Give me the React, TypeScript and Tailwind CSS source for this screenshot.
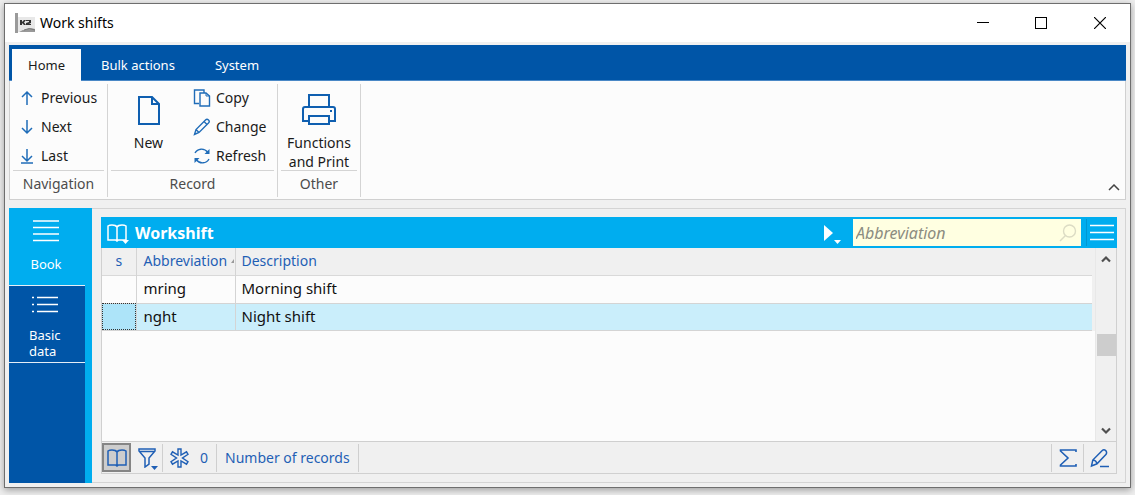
import React, { useState } from 'react';

const rows = [
  { id: 1, abbreviation: 'mring', description: 'Morning shift' },
  { id: 2, abbreviation: 'nght', description: 'Night shift' },
];

function BookIcon() {
  return (
    <svg width="20" height="18" viewBox="0 0 20 18" fill="none" stroke="currentColor" strokeWidth="1.5">
      <path d="M10 3v13M10 3C9 1.300 7 1 5 1S2 1.300 1 2v14h7.500L10 17l1.500-1H19V2c-1-.7-2-1-4-1s-4 .3-5 2" />
    </svg>
  );
}

function Caret({ className }: { className: string }) {
  return (
    <svg className={className} width="7" height="4" viewBox="0 0 7 4" fill="currentColor">
      <path d="M0 0h7L3.500 4Z" />
    </svg>
  );
}

function ArrowIcon({ kind }: { kind: 'up' | 'down' | 'last' }) {
  return (
    <svg width="14" height="16" viewBox="0 0 14 16" fill="none" stroke="currentColor" strokeWidth="1.5">
      {kind === 'up' && <path d="M7 15V2M2 7l5-5 5 5" />}
      {kind === 'down' && <path d="M7 1v13M2 9l5 5 5-5" />}
      {kind === 'last' && <path d="M7 1v12M2 8l5 5 5-5M1 15h12" />}
    </svg>
  );
}

function CopyIcon() {
  return (
    <svg width="18" height="18" viewBox="0 0 18 18" fill="none" stroke="currentColor" strokeWidth="1.400">
      <path d="M6 14.500H1.500V1H11v3" />
      <path d="M7 4h6l3.500 3v10H7Z" />
      <path d="M13 4v3h3.500" strokeWidth="1" />
    </svg>
  );
}

function PencilIcon() {
  return (
    <svg width="18" height="18" viewBox="0 0 18 18" fill="none" stroke="currentColor" strokeWidth="1.400">
      <path d="M1.500 16.500 3 11.500 12.500 2c1-1 2.200-.8 3 0s1 2 0 3L6 14.500ZM3 11.500l3 3M11 3.500l3 3" />
    </svg>
  );
}

function RefreshIcon() {
  return (
    <svg width="18" height="18" viewBox="0 0 18 18" fill="none" stroke="currentColor" strokeWidth="1.400">
      <path d="M2 6C4.500 1.500 11 .5 15 5.500" />
      <path d="M16.500 2v5h-5Z" fill="currentColor" stroke="none" />
      <path d="M16 12c-2.500 4.500-9 5.500-13 .5" />
      <path d="M1.500 16v-5h5Z" fill="currentColor" stroke="none" />
    </svg>
  );
}

function NewIcon() {
  return (
    <svg width="22" height="29" viewBox="0 0 22 29" fill="none" stroke="currentColor" strokeWidth="2">
      <path d="M1 1h13l7 7v20H1ZM14 1v7h7" />
    </svg>
  );
}

function PrintIcon() {
  return (
    <svg width="34" height="31" viewBox="0 0 34 31" fill="none" stroke="currentColor" strokeWidth="2">
      <path d="M7 13V1h20v12M7 27H1V15q0-2 2-2h28q2 0 2 2v12h-6" />
      <path d="M7 22h20v8H7Z" />
      <path d="M28 17h2" />
    </svg>
  );
}

function RibbonButton({ icon, label }: { icon: React.ReactNode; label: string }) {
  return (
    <button className="flex flex-1 items-center gap-1 leading-5">
      <span className="flex w-5 justify-center text-[#1f6cb8]">{icon}</span>
      {label}
    </button>
  );
}

function RibbonGroup({ title, className, children }: { title: string; className: string; children: React.ReactNode }) {
  return (
    <section className={`flex flex-col border-r border-[#d4d4d4] px-[3px] ${className}`}>
      <div className="flex h-[87px] border-b border-[#d4d4d4]">{children}</div>
      <h2 className="flex flex-1 items-center justify-center text-[#4c4c4c]">{title}</h2>
    </section>
  );
}

function TitleBar() {
  return (
    <header className="flex h-[38px] items-center bg-white pl-[10px] text-black">
      <svg width="20" height="20" viewBox="0 0 20 20" aria-hidden="true">
        <path d="M0 0h3v20H0Z" fill="#9a9a9a" />
        <path d="M3 4h17v15H3Z" fill="#e8e8e8" />
        <path d="M5 7h2v2l2-2h2L9 9.500 11 12H9L7 10v2H5ZM11 7h5v3l-2 1h2v1h-5v-2l3-1V8h-3Z" fill="#333" />
        <path d="M3 19c3 0 3-2 6-2s5-3 11-1v3Z" fill="#999" />
        <path d="M9 17q5-3 11 0" fill="none" stroke="#777" />
      </svg>
      <h1 className="flex-1 pl-[5px] text-sm">Work shifts</h1>
      <button aria-label="Minimize" className="flex w-[58px] justify-center">
        <svg width="12" height="12" stroke="currentColor" shapeRendering="crispEdges"><path d="M0 5.500h12" /></svg>
      </button>
      <button aria-label="Maximize" className="flex w-[58px] justify-center">
        <svg width="12" height="12" fill="none" stroke="currentColor" shapeRendering="crispEdges"><path d="M.5.5h11v11H.5Z" /></svg>
      </button>
      <button aria-label="Close" className="flex w-[60px] justify-center">
        <svg width="12" height="12" stroke="currentColor" strokeWidth="1.200"><path d="M0 0l12 12M12 0 0 12" /></svg>
      </button>
    </header>
  );
}

function Ribbon() {
  const [tab, setTab] = useState('Home');

  return (
    <div className="border-x border-b border-[#d0d0d0] bg-[#fcfcfc]">
      <nav className="-mx-px flex h-9 items-end border-b border-[#4a88c6] bg-[#0055a7] pl-[3px] text-[13px]">
        {['Home', 'Bulk actions', 'System'].map((name) => (
          <button
            key={name}
            onClick={() => setTab(name)}
            className={
              tab === name
                ? '-mb-px h-8 bg-[#fcfcfc] px-4 text-[#1a1a1a]'
                : '-mb-px h-8 px-5 text-white'
            }
          >
            {name}
          </button>
        ))}
      </nav>
      <div className="flex h-[118px] items-end">
        <div className="flex h-[115px] flex-1 pb-[2px]">
          <RibbonGroup title="Navigation" className="w-[98px]">
            <div className="flex flex-col pl-[4px]">
              <RibbonButton icon={<ArrowIcon kind="up" />} label="Previous" />
              <RibbonButton icon={<ArrowIcon kind="down" />} label="Next" />
              <RibbonButton icon={<ArrowIcon kind="last" />} label="Last" />
            </div>
          </RibbonGroup>
          <RibbonGroup title="Record" className="w-[170px]">
            <button className="flex w-[75px] flex-col items-center justify-start gap-2 pt-3 leading-5">
              <span className="text-[#0f5fb0]"><NewIcon /></span>
              New
            </button>
            <div className="flex flex-col pl-[6px]">
              <RibbonButton icon={<CopyIcon />} label="Copy" />
              <RibbonButton icon={<PencilIcon />} label="Change" />
              <RibbonButton icon={<RefreshIcon />} label="Refresh" />
            </div>
          </RibbonGroup>
          <RibbonGroup title="Other" className="w-[83px]">
            <button className="flex flex-1 flex-col items-center justify-start gap-2 pt-[10px] leading-[19px] whitespace-nowrap">
              <span className="text-[#0f5fb0]"><PrintIcon /></span>
              <span>Functions<br />and Print</span>
            </button>
          </RibbonGroup>
        </div>
        <button aria-label="Collapse ribbon" className="mr-[5px] mb-2 text-[#444]">
          <svg width="12" height="7" viewBox="0 0 12 7" fill="none" stroke="currentColor" strokeWidth="1.500"><path d="M1 6l5-5 5 5" /></svg>
        </button>
      </div>
    </div>
  );
}

function Sidebar() {
  return (
    <nav className="flex w-[83px] shrink-0 flex-col border-r-[7px] border-[#00adef] bg-[#0055a7] text-[13px] leading-4 text-white">
      <button className="-mr-[7px] flex h-[77px] flex-col items-center bg-[#00adef] pt-3 pr-[9px]">
        <svg className="mb-[14px]" width="26" height="22" stroke="currentColor" strokeWidth="1.500">
          <path d="M0 1h26M0 7.500h26M0 14h26M0 20.500h26" />
        </svg>
        Book
      </button>
      <button className="flex h-[78px] flex-col items-center border-y border-white/90 pt-[10px] pr-1">
        <svg className="mb-[13px]" width="26" height="18" stroke="currentColor" strokeWidth="1.500">
          <path d="M5 1.500h21M5 8.500h21M5 15.500h21M0 1.500h2M0 8.500h2M0 15.500h2" />
        </svg>
        <span className="w-8 text-left">Basic data</span>
      </button>
    </nav>
  );
}

function ShiftTable() {
  const [selected, setSelected] = useState(2);

  return (
    <div className="flex-1 bg-[#fcfcfc]">
      <div className="bg-[#f0f0f0] pr-[3px]">
        <table className="w-full table-fixed border-collapse text-left text-[15px] text-[#111]">
          <colgroup>
            <col className="w-[34px]" />
            <col className="w-[99px]" />
            <col />
          </colgroup>
          <thead>
            <tr className="h-[27px] border-b border-[#d9d9d9] bg-[#f0f0f0] text-sm text-[#1f5fb5]">
              <th className="border-r border-[#d4d4d4] text-center font-normal">s</th>
              <th className="border-r border-[#d4d4d4] pl-[7px] font-normal whitespace-nowrap">
                <span className="flex items-center justify-between">
                  Abbreviation
                  <svg width="4" height="4" fill="#999"><path d="M0 4 3 0v4Z" /></svg>
                </span>
              </th>
              <th className="pl-[6px] font-normal">Description</th>
            </tr>
          </thead>
          <tbody>
            {rows.map((row) => (
              <tr
                key={row.id}
                onClick={() => setSelected(row.id)}
                className={
                  selected === row.id
                    ? 'h-[27px] border-b border-[#d4d4d4] bg-[#caeefb]'
                    : 'h-7 border-b border-[#d4d4d4] bg-[#fcfcfc]'
                }
              >
                <td
                  className={
                    selected === row.id
                      ? 'border-r border-[#d4d4d4] bg-[#ade4f9] outline-1 -outline-offset-1 outline-dotted outline-[#333]'
                      : 'border-r border-[#d4d4d4]'
                  }
                />
                <td className="border-r border-[#d4d4d4] pl-[7px]">{row.abbreviation}</td>
                <td className="pl-[6px]">{row.description}</td>
              </tr>
            ))}
          </tbody>
        </table>
      </div>
    </div>
  );
}

function ScrollBar() {
  return (
    <div className="flex w-[21px] flex-col items-center border-l border-[#e8e8e8] bg-[#f0f0f0] text-[#505050]">
      <button aria-label="Scroll up" className="flex h-[21px] w-full items-center justify-center">
        <svg width="10" height="8" viewBox="0 0 10 8" fill="none" stroke="currentColor" strokeWidth="2.200"><path d="M1 6.500l4-4 4 4" /></svg>
      </button>
      <div className="mt-[65px] h-[22px] w-[19px] bg-[#cdcdcd]" />
      <button aria-label="Scroll down" className="mt-auto flex h-[21px] w-full items-center justify-center">
        <svg width="10" height="8" viewBox="0 0 10 8" fill="none" stroke="currentColor" strokeWidth="2.200"><path d="M1 1.500l4 4 4-4" /></svg>
      </button>
    </div>
  );
}

function StatusBar() {
  return (
    <footer className="flex h-8 items-center border-t border-[#cfcfcf] text-[#1f5fb5]">
      <button aria-label="Book view" className="flex h-[29px] w-[29px] items-center justify-center border-2 border-[#858585] bg-[#cdcdcd]">
        <BookIcon />
      </button>
      <button aria-label="Filter" className="relative flex h-7 w-8 items-center justify-center border-r border-[#cfcfcf]">
        <svg width="18" height="20" viewBox="0 0 18 20" fill="none" stroke="currentColor" strokeWidth="1.500">
          <path d="M1 1h16v2l-6 7v6l-4 3v-9L1 3ZM2 3.500h14" />
        </svg>
        <Caret className="absolute right-1 bottom-[2px]" />
      </button>
      <div className="flex h-7 w-[54px] items-center justify-between border-r border-[#cfcfcf] pr-2 pl-[7px]">
        <svg width="19" height="20" viewBox="0 0 19 20" fill="none" stroke="currentColor" strokeWidth="1.400">
          <path d="M8 1h3v6l5.500-3.200 1.500 2.600L12.500 10l5.500 3.600-1.500 2.600L11 13v6H8v-6l-5.500 3.200L1 13.600 6.500 10 1 6.400l1.500-2.600L8 7Z" />
        </svg>
        <span>0</span>
      </div>
      <span className="flex h-7 items-center border-r border-[#cfcfcf] px-2">Number of records</span>
      <button aria-label="Sum" className="ml-auto flex h-7 w-[33px] items-center justify-center border-x border-[#cfcfcf]">
        <svg width="18" height="18" viewBox="0 0 18 18" fill="none" stroke="currentColor" strokeWidth="1.600">
          <path d="M17 3V1H1.500v1L9 9l-7.500 7v1H17v-2" />
        </svg>
      </button>
      <button aria-label="Edit" className="flex h-7 w-8 items-center justify-center">
        <svg width="20" height="20" viewBox="0 0 20 20" fill="none" stroke="currentColor" strokeWidth="1.500">
          <path d="M1.500 18l1.300-6L12 2.800c1-1 2.600-1.200 3.700-.2s1.200 2.700.2 3.800L7 15.800ZM2.800 12c2 .2 3.800 1.800 4.200 3.800M10 18.500h9" />
        </svg>
      </button>
    </footer>
  );
}

function WorkshiftPanel() {
  return (
    <main className="flex flex-1 flex-col border-t border-r border-b border-[#d4d4d4] pt-2 pr-2 pb-2 pl-[9px]">
      <div className="flex h-[31px] items-center bg-[#00adef] pl-[6px] text-white">
        <button aria-label="Book menu" className="relative h-5 w-[22px]">
          <BookIcon />
          <Caret className="absolute right-0 -bottom-px" />
        </button>
        <h2 className="flex-1 pl-[6px] text-base font-bold">Workshift</h2>
        <button aria-label="Run" className="relative mr-3 h-5 w-[17px]">
          <svg width="10" height="16" fill="currentColor"><path d="M0 0l9 8-9 8Z" /></svg>
          <Caret className="absolute right-0 -bottom-px" />
        </button>
        <div className="flex h-[27px] w-[228px] items-center bg-[#ffffe1] pr-1 pl-[3px]">
          <input
            aria-label="Search by abbreviation"
            placeholder="Abbreviation"
            className="w-full min-w-0 text-base text-[#333] italic outline-none placeholder:text-[#8c8c80]"
          />
          <svg className="shrink-0" width="18" height="18" viewBox="0 0 18 18" fill="none" stroke="#dcdcc4" strokeWidth="1.400">
            <circle cx="10.500" cy="7" r="6" />
            <path d="M6.500 11.500 1 17" />
          </svg>
        </div>
        <button aria-label="Menu" className="ml-[5px] flex h-[27px] w-[31px] items-center justify-center border-l border-[#0097d1]">
          <svg width="24" height="17" stroke="currentColor" strokeWidth="1.500"><path d="M0 1.500h24M0 8.500h24M0 15.500h24" /></svg>
        </button>
      </div>
      <div className="flex flex-1 flex-col border-x border-b border-[#d0d0d0]">
        <div className="flex flex-1">
          <ShiftTable />
          <ScrollBar />
        </div>
        <StatusBar />
      </div>
    </main>
  );
}

export default function App() {
  return (
    <div className="flex min-h-screen bg-[#eeeeee] px-1 pt-[3px] pb-[7px] font-['Noto_Sans',sans-serif] text-sm text-[#1a1a1a]">
      <div className="flex flex-1 flex-col border border-[#6e6e6e] bg-[#f0f0f0] shadow-[0_2px_7px_rgba(0,0,0,0.35)]">
        <TitleBar />
        <div className="flex flex-1 flex-col gap-2 px-1 pt-[3px] pb-1">
          <Ribbon />
          <div className="flex flex-1">
            <Sidebar />
            <WorkshiftPanel />
          </div>
        </div>
      </div>
    </div>
  );
}
